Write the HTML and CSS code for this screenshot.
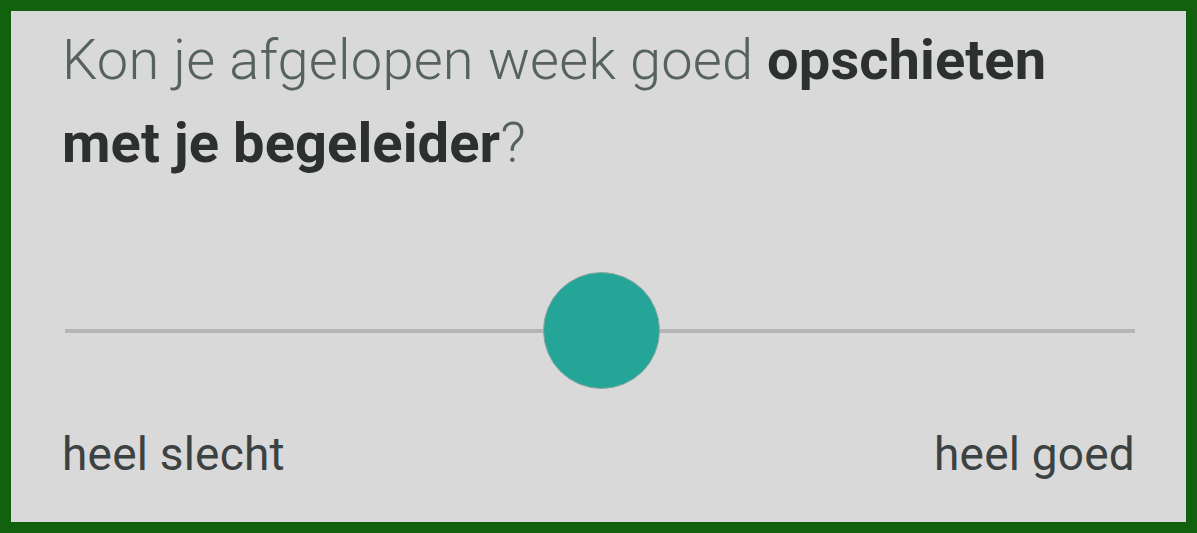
FILE: index.html
```html
<!DOCTYPE html>
<html lang="nl">
<head>
<meta charset="utf-8">
<link rel="stylesheet" href="styles.css">
</head>
<body>
<div class="frame">
  <div class="card">
    <p class="question">Kon je afgelopen week goed <strong>opschieten met je begeleider</strong>?</p>
    <div class="slider">
      <div class="track"></div>
      <div class="thumb"></div>
    </div>
    <div class="labels">
      <span>heel slecht</span>
      <span>heel goed</span>
    </div>
  </div>
</div>
</body>
</html>
```
FILE: styles.css
```css
html, body {
  margin: 0;
  padding: 0;
}
body {
  width: 1197px;
  height: 533px;
  overflow: hidden;
  background: #11610f;
}
.frame {
  box-sizing: border-box;
  width: 1197px;
  height: 533px;
  padding: 11px;
  background: #11610f;
}
.card {
  box-sizing: border-box;
  height: 100%;
  background: #d9d9d9;
  padding: 0 51px;
  display: flex;
  flex-direction: column;
  font-family: Roboto, "Noto Sans", sans-serif;
}
.question {
  margin: 8px 0 0 0;
  font-size: 56px;
  line-height: 83px;
  font-weight: 300;
  color: #56625f;
  letter-spacing: 0.2px;
}
.question strong {
  font-weight: 700;
  color: #2d3030;
  letter-spacing: 0.1px;
}
.slider {
  position: relative;
  height: 117px;
  margin-top: 87px;
  display: flex;
  align-items: center;
}
.track {
  flex: 1;
  height: 4px;
  margin-left: 3px;
  background: #b5b5b5;
}
.thumb {
  position: absolute;
  left: 481px;
  top: 0;
  width: 115px;
  height: 115px;
  border-radius: 50%;
  background: #25a598;
  border: 1px solid #8fa8a4;
}
.labels {
  margin-top: 38px;
  display: flex;
  justify-content: space-between;
  font-size: 46px;
  color: #3b4241;
  letter-spacing: 0.2px;
}
```
